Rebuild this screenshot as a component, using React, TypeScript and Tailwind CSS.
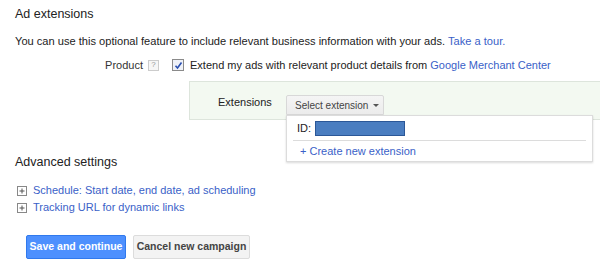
function PlusBox() {
  return (
    <svg width="10" height="10" viewBox="0 0 10 10" className="shrink-0">
      <rect x="0.5" y="0.5" width="9" height="9" fill="#fff" stroke="#888" />
      <path d="M2.5 5h5M5 2.5v5" stroke="#555" strokeWidth="1" />
    </svg>
  );
}

export default function App() {
  return (
    <div className="w-[600px] h-[265px] overflow-hidden bg-white font-['Liberation_Sans',Arial,sans-serif] text-[#222]">
      <div className="pl-[15px] pt-[6px]">
        <h2 className="text-[12.5px] leading-[16px] text-[#222]">Ad extensions</h2>
        <p className="mt-[12px] text-[11.1px] leading-[14px] text-[#222]">
          You can use this optional feature to include relevant business information with your ads.{" "}
          <a className="text-[#3a5fc8]">Take a tour.</a>
        </p>
      </div>

      {/* Product row */}
      <div className="mt-[10px] flex items-center h-[14px] text-[11px] leading-[14px]">
        <span className="w-[143px] text-right text-[#333]">Product</span>
        <span className="ml-[5px] flex h-[11px] w-[11px] items-center justify-center border border-[#ccc] bg-[#f6f6f6] text-[8px] leading-none text-[#999]">
          ?
        </span>
        <span className="ml-[13px] flex h-[12px] w-[12px] items-center justify-center border border-[#8a8a8a] bg-[#eef1f8]">
          <svg width="9" height="9" viewBox="0 0 9 9">
            <path d="M1.5 4.8l2 2.2 4-5.5" fill="none" stroke="#2a4fb0" strokeWidth="1.6" />
          </svg>
        </span>
        <span className="ml-[6px] text-[#222]">
          Extend my ads with relevant product details from{" "}
          <a className="text-[#3a5fc8]">Google Merchant Center</a>
        </span>
      </div>

      {/* Extensions box */}
      <div className="relative z-10 ml-[189px] mt-[9px] h-[39px] border border-r-0 border-[#dde5dc] bg-[#f3f9f1]">
        <div className="flex items-start pt-[13px]">
          <span className="ml-[28px] w-[68px] text-[11px] leading-[14px] text-[#222]">Extensions</span>
          <div className="relative">
            <button className="flex h-[20px] w-[98px] items-center rounded-t-[2px] border border-[#d8d8d8] bg-gradient-to-b from-[#f5f5f5] to-[#ececec] pl-[8px] text-[10px] text-[#444]">
              Select extension
              <span className="ml-[5px] mt-[1px] h-0 w-0 border-x-[3px] border-t-[3px] border-x-transparent border-t-[#555]" />
            </button>
            <div className="absolute left-0 top-full w-[307px] h-[47px] border border-[#dcdcdc] bg-white shadow-[0_1px_2px_rgba(0,0,0,0.15)]">
              <div className="mx-[6px] flex items-center h-[25px] border-b border-[#dcdcdc] pl-[4px] text-[11px] text-[#222]">
                ID:
                <span className="ml-[4px] h-[15px] w-[90px] border border-[#2b5797] bg-[#4a7dc0]" />
              </div>
              <div className="pl-[13px] pt-[3px] text-[11px] leading-[14px] text-[#3a5fc8]">+ Create new extension</div>
            </div>
          </div>
        </div>
      </div>

      <div className="pl-[15px]">
        <h2 className="mt-[34px] text-[12.5px] leading-[16px] text-[#222]">Advanced settings</h2>
        <div className="mt-[12px] flex flex-col text-[11px] leading-[17px]">
          <div className="flex items-center gap-[6px] pl-[2px]">
            <PlusBox />
            <a className="text-[#3a5fc8]">Schedule: Start date, end date, ad scheduling</a>
          </div>
          <div className="flex items-center gap-[6px] pl-[2px]">
            <PlusBox />
            <a className="text-[#3a5fc8]">Tracking URL for dynamic links</a>
          </div>
        </div>
        <div className="mt-[19px] ml-[11px] flex gap-[7px]">
          <button className="h-[24px] w-[100px] rounded-[2px] border border-[#3079ed] bg-[#4d90fe] text-[10.5px] font-bold text-white">
            Save and continue
          </button>
          <button className="h-[24px] w-[117px] rounded-[2px] border border-[#dcdcdc] bg-[#f3f3f3] text-[10.5px] font-bold text-[#444]">
            Cancel new campaign
          </button>
        </div>
      </div>
    </div>
  );
}
